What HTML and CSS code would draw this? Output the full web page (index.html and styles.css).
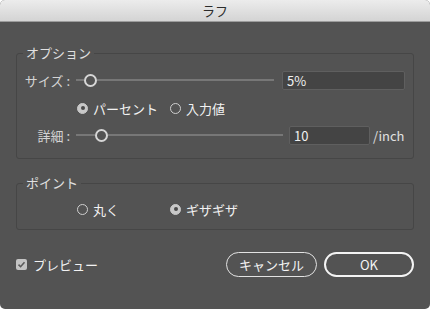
FILE: index.html
```html
<!DOCTYPE html>
<html lang="ja">

<head>
    <meta charset="UTF-8">
    <meta name="viewport" content="width=device-width, initial-scale=1.0">
    <title>ラフ</title>
    <link rel="stylesheet" href="styles.css">
</head>

<body>
    <div class="window">
        <div class="titlebar">ラフ</div>

        <div class="content">
            <fieldset class="group">
                <legend>オプション</legend>

                <div class="row">
                    <span class="row-label">サイズ :</span>
                    <div class="slider slider-size">
                        <span class="track track-left"></span>
                        <span class="knob"></span>
                        <span class="track track-right"></span>
                    </div>
                    <input class="field field-size" type="text" value="5%">
                </div>

                <div class="row options">
                    <label class="radio"><span class="dot checked"></span>パーセント</label>
                    <label class="radio"><span class="dot"></span>入力値</label>
                </div>

                <div class="row row-detail">
                    <span class="row-label">詳細 :</span>
                    <div class="slider slider-detail">
                        <span class="track track-left"></span>
                        <span class="knob"></span>
                        <span class="track track-right"></span>
                    </div>
                    <input class="field field-detail" type="text" value="10">
                    <span class="unit">/inch</span>
                </div>
            </fieldset>

            <fieldset class="group group-point">
                <legend>ポイント</legend>

                <div class="row options">
                    <label class="radio"><span class="dot"></span>丸く</label>
                    <label class="radio"><span class="dot checked"></span>ギザギザ</label>
                </div>
            </fieldset>

            <div class="footer">
                <label class="preview">
                    <span class="checkbox">
                        <svg width="9" height="9" viewBox="0 0 9 9">
                            <path d="M1.5 4.6 L3.6 6.7 L7.5 2.2" fill="none" stroke="#5a5a5a" stroke-width="1.6" />
                        </svg>
                    </span>
                    プレビュー
                </label>
                <div class="buttons">
                    <button class="btn btn-cancel">キャンセル</button>
                    <button class="btn btn-ok">OK</button>
                </div>
            </div>
        </div>
    </div>
</body>

</html>
```

FILE: styles.css
```css
* {
    box-sizing: border-box;
}

body {
    margin: 0;
    padding: 0;
    background: #ffffff;
    font-family: "Noto Sans CJK JP", "Noto Sans", sans-serif;
    font-size: 13px;
    color: #e8e8e8;
}

.window {
    width: 430px;
    height: 309px;
    background: #535353;
    border-radius: 5px;
    overflow: hidden;
}

.titlebar {
    height: 22px;
    line-height: 21px;
    text-align: center;
    color: #2c2c2c;
    font-size: 13px;
    background: linear-gradient(#ececec, #d4d4d4);
    border-bottom: 1px solid #9c9c9c;
}

.content {
    padding: 23px 16px 0;
}

.group {
    margin: 0;
    padding: 9px 0 13px;
    border: 1px solid #464646;
    border-radius: 3px;
    min-width: 0;
}

.group legend {
    margin-left: 6px;
    padding: 0 3px;
    height: 16px;
    line-height: 16px;
    color: #e0e0e0;
}

.group-point {
    margin-top: 16px;
    padding: 8px 0 10px;
}

.row {
    display: flex;
    align-items: center;
    height: 20px;
}

.row-label {
    width: 53px;
    text-align: right;
    color: #d4d4d4;
    white-space: nowrap;
}

.slider {
    display: flex;
    align-items: center;
    height: 14px;
    margin-left: 6px;
}

.slider-size {
    width: 198px;
}

.slider-detail {
    width: 207px;
}

.track {
    height: 2px;
    background: #777777;
}

.track-right {
    flex: 1;
}

.slider-size .track-left {
    width: 8px;
}

.slider-detail .track-left {
    width: 19px;
}

.knob {
    width: 13px;
    height: 13px;
    border-radius: 50%;
    border: 2px solid #d6d6d6;
    background: #535353;
    flex-shrink: 0;
}

.field {
    height: 19px;
    padding: 0 4px;
    font-family: "Noto Sans CJK JP", "Noto Sans", sans-serif;
    font-size: 13px;
    color: #f0f0f0;
    background: #444444;
    border: 1px solid #5f5f5f;
    border-radius: 2px;
    outline: none;
}

.field-size {
    width: 123px;
    margin-left: 8px;
}

.field-detail {
    width: 81px;
    margin-left: 6px;
}

.unit {
    margin-left: 3px;
    color: #e0e0e0;
}

.options {
    display: grid;
    grid-template-columns: 93px 93px;
    padding-left: 60px;
    margin-top: 8px;
}

.group-point .options {
    margin-top: 0;
}

.row-detail {
    margin-top: 7px;
}

.radio {
    display: flex;
    align-items: center;
    gap: 5px;
    color: #f2f2f2;
    white-space: nowrap;
}

.dot {
    width: 11px;
    height: 11px;
    border-radius: 50%;
    border: 1px solid #cfcfcf;
    flex-shrink: 0;
    display: flex;
    align-items: center;
    justify-content: center;
}

.dot.checked {
    background: #c8c8c8;
    border-color: #c8c8c8;
}

.dot.checked::after {
    content: "";
    width: 4px;
    height: 4px;
    border-radius: 50%;
    background: #4a4a4a;
}

.footer {
    display: flex;
    align-items: center;
    justify-content: space-between;
    margin-top: 22px;
}

.preview {
    display: flex;
    align-items: center;
    gap: 6px;
    color: #f2f2f2;
}

.checkbox {
    width: 11px;
    height: 11px;
    border-radius: 2px;
    background: #c4c4c4;
    display: flex;
    align-items: center;
    justify-content: center;
}

.buttons {
    display: flex;
    gap: 7px;
}

.btn {
    height: 25px;
    border-radius: 13px;
    background: transparent;
    color: #f4f4f4;
    font-family: "Noto Sans CJK JP", "Noto Sans", sans-serif;
    font-size: 13px;
    padding: 0;
    cursor: pointer;
}

.btn-cancel {
    width: 91px;
    border: 1px solid #e2e2e2;
}

.btn-ok {
    width: 90px;
    border: 2px solid #f4f4f4;
}
```
